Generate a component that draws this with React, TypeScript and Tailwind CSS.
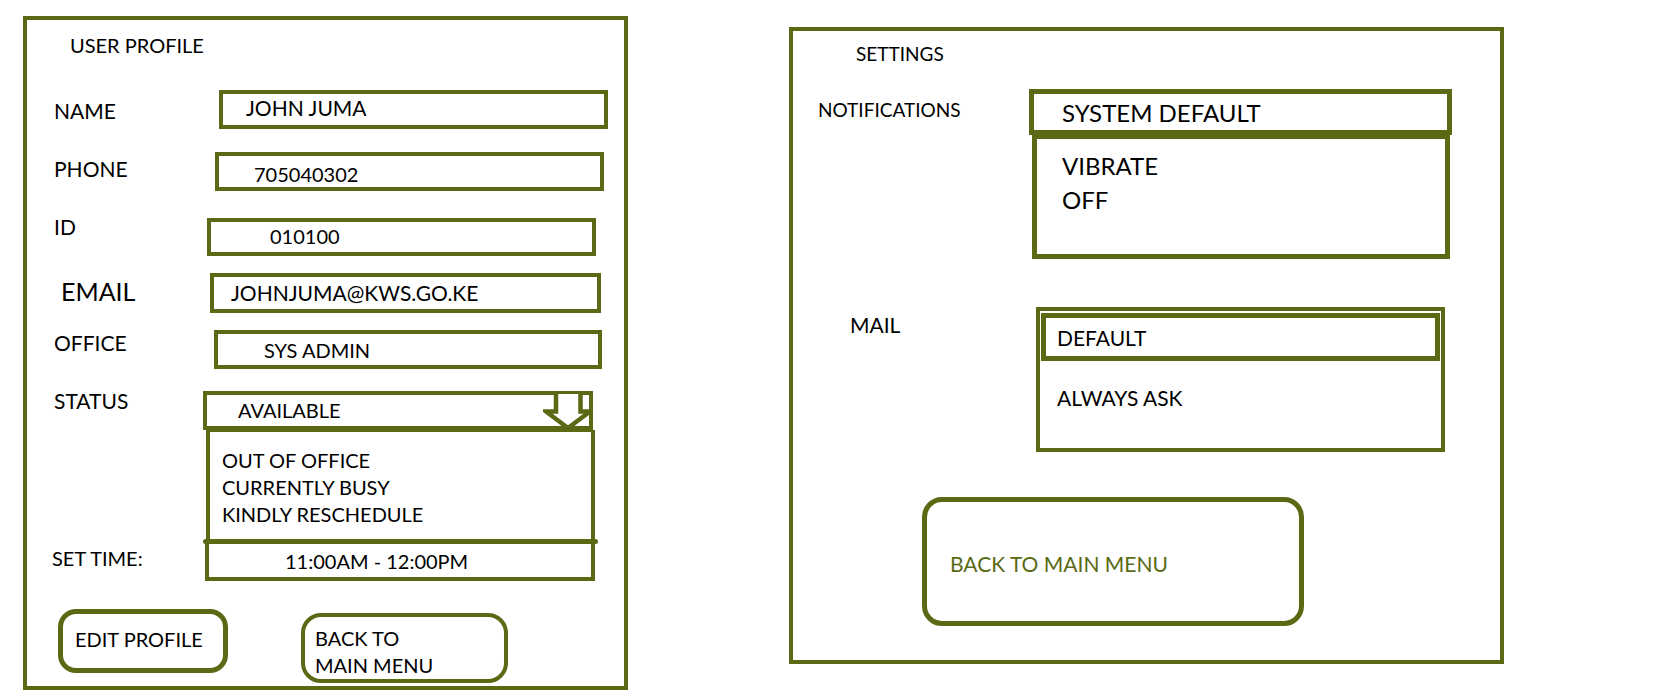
export default function App() {
  return (
    <div className="flex h-[699px] w-[1674px] items-start bg-white font-['Lato',sans-serif] text-black">
      {/* User profile wireframe */}
      <div className="ml-[23px] mt-[16px] flex h-[674px] w-[605px] shrink-0 flex-col border-4 border-[#5a6a14]">
        <h1 className="ml-[43px] mt-[13px] text-[20px] leading-[24px]">USER PROFILE</h1>

        <div className="mt-[33px] flex items-start">
          <span className="ml-[27px] mt-[9px] w-[165px] shrink-0 text-[21px] leading-[24px]">NAME</span>
          <div className="flex h-[39px] w-[389px] items-center border-4 border-[#5a6a14] pb-[3px] pl-[23px] text-[21px] leading-[24px]">
            JOHN JUMA
          </div>
        </div>

        <div className="mt-[23px] flex items-start">
          <span className="ml-[27px] mt-[5px] w-[161px] shrink-0 text-[21px] leading-[24px]">PHONE</span>
          <div className="flex h-[39px] w-[389px] items-center border-4 border-[#5a6a14] pl-[35px] pt-[5px] text-[20px] leading-[24px]">
            705040302
          </div>
        </div>

        <div className="mt-[27px] flex items-start">
          <span className="-mt-[3px] ml-[27px] w-[153px] shrink-0 text-[21px] leading-[24px]">ID</span>
          <div className="flex h-[38px] w-[389px] items-center border-4 border-[#5a6a14] pb-[3px] pl-[59px] text-[20px] leading-[24px]">
            010100
          </div>
        </div>

        <div className="mt-[17px] flex items-start">
          <span className="ml-[34px] mt-[3px] w-[149px] shrink-0 text-[25px] leading-[30px]">EMAIL</span>
          <div className="flex h-[40px] w-[391px] items-center border-4 border-[#5a6a14] pl-[17px] text-[21px] leading-[24px]">
            JOHNJUMA@KWS.GO.KE
          </div>
        </div>

        <div className="mt-[17px] flex items-start">
          <span className="ml-[27px] mt-[1px] w-[160px] shrink-0 text-[21px] leading-[24px]">OFFICE</span>
          <div className="flex h-[39px] w-[388px] items-center border-4 border-[#5a6a14] pl-[46px] text-[20px] leading-[24px]">
            SYS ADMIN
          </div>
        </div>

        <div className="mt-[22px] flex items-start">
          <span className="-mt-[2px] ml-[27px] w-[149px] shrink-0 text-[21px] leading-[24px]">STATUS</span>
          <div className="flex flex-col">
            <div className="relative flex h-[39px] w-[390px] items-center border-4 border-[#5a6a14] pb-[2px] pl-[31px] text-[20px] leading-[24px]">
              AVAILABLE
              {/* hollow down arrow of the dropdown */}
              <svg className="absolute -right-[4px] -top-[4px]" width="50" height="39" viewBox="0 0 50 39" fill="none">
                <path d="M13 3 V20.5 H3 L25 37 L47 20.5 H37.5 V3" stroke="#5a6a14" strokeWidth="4.5" fill="white" />
              </svg>
            </div>
            <div className="ml-[3px] flex h-[109px] w-[389px] flex-col border-x-4 border-t-2 border-[#5a6a14] pl-[12px] pt-[15px] text-[20px] leading-[27px]">
              <span>OUT OF OFFICE</span>
              <span>CURRENTLY BUSY</span>
              <span>KINDLY RESCHEDULE</span>
            </div>
          </div>
        </div>

        <div className="flex items-start">
          <span className="ml-[25px] mt-[7px] w-[151px] shrink-0 text-[20px] leading-[24px]">SET TIME:</span>
          <div className="flex flex-col">
            <div className="h-[5px] w-[395px] rounded-full bg-[#5a6a14]" />
            <div className="ml-[2px] flex h-[37px] w-[390px] items-center border-x-4 border-b-4 border-[#5a6a14] pl-[76px] text-[20px] leading-[24px]">
              11:00AM - 12:00PM
            </div>
          </div>
        </div>

        <div className="mt-[28px] flex items-start">
          <button className="ml-[31px] flex h-[64px] w-[170px] items-center rounded-[18px] border-[5px] border-[#5a6a14] pb-[4px] pl-[12px] text-[20px] leading-[24px]">
            EDIT PROFILE
          </button>
          <button className="ml-[73px] mt-[4px] flex h-[70px] w-[207px] flex-col items-start justify-center rounded-[20px] border-4 border-[#5a6a14] pl-[10px] pt-[8px] text-left text-[20px] leading-[27px]">
            <span>BACK TO</span>
            <span>MAIN MENU</span>
          </button>
        </div>
      </div>

      {/* Settings wireframe */}
      <div className="ml-[161px] mt-[27px] flex h-[637px] w-[715px] shrink-0 flex-col border-4 border-[#5a6a14]">
        <h2 className="ml-[63px] mt-[11px] text-[19px] leading-[24px]">SETTINGS</h2>

        <div className="mt-[23px] flex items-start">
          <span className="ml-[25px] mt-[9px] w-[211px] shrink-0 text-[19px] leading-[24px]">NOTIFICATIONS</span>
          <div className="flex flex-col">
            <div className="flex h-[46px] w-[423px] items-center border-[5px] border-[#5a6a14] pl-[28px] pt-[2px] text-[24px] leading-[28px]">
              SYSTEM DEFAULT
            </div>
            <div className="ml-[3px] flex h-[124px] w-[418px] flex-col border-x-[5px] border-b-[5px] border-t-4 border-[#5a6a14] pl-[25px] pt-[10px] text-[24px] leading-[34px]">
              <span>VIBRATE</span>
              <span>OFF</span>
            </div>
          </div>
        </div>

        <div className="mt-[48px] flex items-start">
          <span className="ml-[57px] mt-[6px] w-[186px] shrink-0 text-[21px] leading-[24px]">MAIL</span>
          <div className="flex h-[145px] w-[409px] flex-col border-4 border-[#5a6a14]">
            <div className="mx-[1px] mt-[2px] flex h-[48px] items-center border-[5px] border-[#5a6a14] pl-[11px] pt-[2px] text-[21px] leading-[24px]">
              DEFAULT
            </div>
            <span className="mt-[25px] pl-[17px] text-[21px] leading-[24px]">ALWAYS ASK</span>
          </div>
        </div>

        <button className="ml-[129px] mt-[45px] flex h-[129px] w-[382px] items-center rounded-[20px] border-[5px] border-[#5a6a14] pl-[23px] pt-[4px] text-[21px] leading-[24px] text-[#5a6a14]">
          BACK TO MAIN MENU
        </button>
      </div>
    </div>
  );
}
